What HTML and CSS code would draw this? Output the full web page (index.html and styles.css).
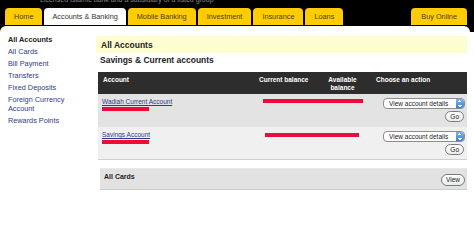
FILE: index.html
```html
<!DOCTYPE html>
<html lang="en">
<head>
    <meta charset="UTF-8">
    <title>All Accounts</title>
    <link rel="stylesheet" href="styles.css">
</head>
<body>

    <!-- TOP BAR WITH TABS -->
    <div class="top">
        <p class="tagline">Licensed Islamic bank and a subsidiary of a listed group</p>
        <nav class="tabs">
            <a class="tab">Home</a>
            <a class="tab active">Accounts &amp; Banking</a>
            <a class="tab">Mobile Banking</a>
            <a class="tab">Investment</a>
            <a class="tab">Insurance</a>
            <a class="tab">Loans</a>
            <a class="tab buy">Buy Online</a>
        </nav>
    </div>

    <div class="frame">
        <!-- SIDE MENU -->
        <ul class="side">
            <li class="current">All Accounts</li>
            <li><a>All Cards</a></li>
            <li><a>Bill Payment</a></li>
            <li><a>Transfers</a></li>
            <li><a>Fixed Deposits</a></li>
            <li><a>Foreign Currency Account</a></li>
            <li><a>Rewards Points</a></li>
        </ul>

        <!-- ACCOUNTS -->
        <div class="main">
            <h1 class="page-title">All Accounts</h1>
            <h2 class="sub-title">Savings &amp; Current accounts</h2>

            <table class="accounts">
                <thead>
                    <tr>
                        <th class="col-account">Account</th>
                        <th class="col-current">Current balance</th>
                        <th class="col-available">Available balance</th>
                        <th class="col-action">Choose an action</th>
                    </tr>
                </thead>
                <tbody>
                    <tr class="row-dark">
                        <td>
                            <a class="acc-link">Wadiah Current Account</a>
                            <span class="redact short"></span>
                        </td>
                        <td colspan="2"><span class="redact long"></span></td>
                        <td class="action">
                            <span class="select-wrap"><select><option>View account details</option></select></span>
                            <button class="pill">Go</button>
                        </td>
                    </tr>
                    <tr class="row-light">
                        <td>
                            <a class="acc-link">Savings Account</a>
                            <span class="redact short"></span>
                        </td>
                        <td colspan="2"><span class="redact long second"></span></td>
                        <td class="action">
                            <span class="select-wrap"><select><option>View account details</option></select></span>
                            <button class="pill">Go</button>
                        </td>
                    </tr>
                </tbody>
            </table>

            <div class="cards-bar">
                <span>All Cards</span>
                <button class="pill">View</button>
            </div>
        </div>
    </div>

</body>
</html>
```

FILE: styles.css
```css
* { margin: 0; padding: 0; box-sizing: border-box; }

body {
    background: #fff;
    font-family: "Liberation Sans", Arial, sans-serif;
    color: #222;
    width: 474px;
    height: 248px;
    overflow: hidden;
}

/* black band behind the tabs */
.top {
    background: #000;
    height: 32px;
}

.tagline {
    height: 4px;
    line-height: 0;
    overflow: hidden;
    padding-left: 40px;
    font-size: 7px;
    color: #8a8a8a;
}

.tabs {
    display: flex;
    gap: 2px;
    margin-top: 4px;
    padding-left: 5px;
    padding-right: 7px;
}

.tab {
    display: block;
    height: 17px;
    line-height: 17px;
    padding: 0 9px;
    background: #ffcc00;
    color: #4a3d10;
    font-size: 7.3px;
    border-radius: 4px 4px 0 0;
}

.tab.active {
    background: #fff;
    color: #333;
    padding: 0 8px;
}

.tab.buy {
    margin-left: auto;
    padding: 0 10px;
}

.frame {
    display: flex;
    background: #fff;
    margin-top: -6px;
    margin-right: 4px;
    border-radius: 6px 6px 0 0;
    height: 222px;
}

/* side menu */
.side {
    list-style: none;
    width: 96px;
    flex-shrink: 0;
    padding: 9px 8px 0 8px;
    display: flex;
    flex-direction: column;
    gap: 2.6px;
    font-size: 7.3px;
    line-height: 9.4px;
}

.side a { color: #2c3c88; }

.side .current {
    font-weight: bold;
    color: #222;
}

/* main column */
.main {
    flex: 1;
    padding-top: 10px;
    padding-right: 3px;
}

.page-title {
    background: #fdfdd0;
    height: 17px;
    line-height: 18px;
    padding-left: 5px;
    font-size: 8.5px;
    color: #222;
}

.sub-title {
    font-size: 8.5px;
    margin: 2px 0 0 4px;
    line-height: 11px;
    color: #222;
}

.accounts {
    margin: 6px 0 0 2px;
    width: 369px;
    border-collapse: collapse;
    font-size: 6.5px;
    border-bottom: 1px solid #cfcfcf;
}

.accounts th {
    background: #2d2d2d;
    color: #fff;
    height: 22px;
    font-weight: bold;
    text-align: left;
    line-height: 8px;
    vertical-align: top;
    padding-top: 4px;
}

.col-account { width: 155px; padding-left: 5px; }
.col-current { width: 60px; padding-left: 6px; }
.col-available { width: 59px; text-align: center !important; padding: 4px 12px 0 12px; }
.col-action { padding-left: 4px; }

.accounts td {
    vertical-align: top;
    padding-top: 4px;
}

.accounts td:first-child { padding-left: 4px; }

.row-dark td { background: #e3e3e3; height: 33px; }
.row-light td { background: #f0f0f0; height: 32px; }

.acc-link {
    display: block;
    color: #2c3c88;
    text-decoration: underline;
    line-height: 7px;
}

.redact {
    display: block;
    background: #ee0a3c;
    height: 4px;
}

.redact.short {
    width: 47px;
    margin-top: 2px;
}

.redact.long {
    width: 100px;
    margin: 1px 0 0 10px;
}

.redact.second {
    width: 94px;
    margin: 2px 0 0 12px;
}

.action {
    text-align: right;
    padding-right: 2px;
}

.select-wrap {
    display: inline-block;
    position: relative;
}

.select-wrap select {
    appearance: none;
    -webkit-appearance: none;
    width: 82px;
    height: 11px;
    border: 1px solid #8d8d8d;
    border-radius: 4px;
    background: #fff;
    font-family: "Liberation Sans", Arial, sans-serif;
    font-size: 6.5px;
    color: #222;
    padding: 0 12px 0 5px;
    display: block;
}

/* blue stepper on the right of the select */
.select-wrap::after {
    content: "";
    position: absolute;
    right: 1px;
    top: 1px;
    width: 8px;
    height: 9px;
    border-radius: 0 3px 3px 0;
    background: linear-gradient(#7fb2f0, #3d7fd6);
}

.select-wrap::before {
    content: "";
    position: absolute;
    right: 3px;
    top: 2px;
    width: 4px;
    height: 7px;
    z-index: 1;
    background:
        linear-gradient(135deg, transparent 50%, #fff 50%) 0 0 / 2px 2px no-repeat,
        linear-gradient(225deg, transparent 50%, #fff 50%) 2px 0 / 2px 2px no-repeat,
        linear-gradient(45deg, transparent 50%, #fff 50%) 0 5px / 2px 2px no-repeat,
        linear-gradient(315deg, transparent 50%, #fff 50%) 2px 5px / 2px 2px no-repeat;
}

.pill {
    display: block;
    margin: 2px 1px 0 auto;
    height: 11px;
    padding: 0 4px;
    border: 1px solid #7a7a7a;
    border-radius: 6px;
    background: linear-gradient(#fff, #ececec);
    font-family: "Liberation Sans", Arial, sans-serif;
    font-size: 6.5px;
    color: #222;
    line-height: 9px;
}

.cards-bar {
    display: flex;
    justify-content: space-between;
    align-items: flex-start;
    margin: 8px 0 0 4px;
    width: 367px;
    height: 22px;
    background: #e2e2e2;
    border-bottom: 1px solid #cdcdcd;
    border-top: 1px solid #e9e9e9;
    padding: 4px 2px 0 4px;
    font-size: 7px;
    font-weight: bold;
    color: #222;
}

.cards-bar .pill {
    margin: 1px 0 0;
    height: 12px;
    padding: 0 4px;
    font-weight: normal;
}
```
